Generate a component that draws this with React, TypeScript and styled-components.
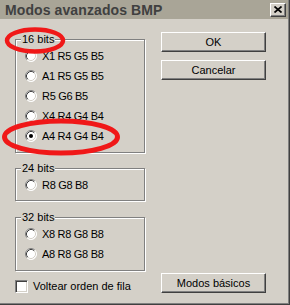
import styled, { createGlobalStyle } from "styled-components"

const GlobalStyle = createGlobalStyle`
    html, body {
        margin: 0;
        padding: 0;
        background: #d4d0c8;
    }
    body {
        font-family: "Liberation Sans", Arial, sans-serif;
        font-size: 11px;
        color: #000;
    }
`

const Window = styled.div`
    position: relative;
    box-sizing: border-box;
    width: 290px;
    height: 305px;
    display: flex;
    flex-direction: column;
    background: #d4d0c8;
    border-right: 1px solid #404040;
    border-bottom: 1px solid #404040;
    padding: 0 1px 1px 0;
    box-shadow: inset -1px -1px 0 #808080;
`

const TitleBar = styled.div`
    display: flex;
    align-items: center;
    justify-content: space-between;
    height: 19px;
    padding: 0 2px 0 5px;
    background: #a9a597;
    color: #404040;
    font-weight: bold;
    font-size: 14px;
    letter-spacing: 0.1px;
`

const CloseButton = styled.div`
    box-sizing: border-box;
    width: 16px;
    height: 14px;
    display: flex;
    align-items: center;
    justify-content: center;
    background: #d4d0c8;
    border-top: 1px solid #fff;
    border-left: 1px solid #fff;
    border-right: 1px solid #404040;
    border-bottom: 1px solid #404040;
    box-shadow: inset -1px -1px 0 #808080;
`

const Body = styled.div`
    flex: 1;
    display: flex;
    gap: 16px;
    padding-left: 15px;
`

const LeftColumn = styled.div`
    display: flex;
    flex-direction: column;
    padding-top: 14px;
`

const Group = styled.fieldset<{ $gap?: number; $bottom?: number }>`
    box-sizing: border-box;
    width: 130px;
    margin: ${p => p.$gap ?? 0}px 0 0 0;
    padding: 0 0 ${p => p.$bottom ?? 6}px 9px;
    border: 1px solid #808080;
    box-shadow: inset 1px 1px 0 #fff, 1px 1px 0 #fff;
    min-inline-size: 0;
`

const Legend = styled.legend`
    margin-left: -4px;
    padding: 0 1px;
    line-height: 13px;
    background: #d4d0c8;
`

const OptionRow = styled.label`
    display: flex;
    align-items: center;
    gap: 5px;
    height: 20px;
    letter-spacing: -0.3px;
`

const CheckRow = styled.label`
    display: flex;
    align-items: center;
    gap: 5px;
    height: 16px;
    margin-top: 7px;
`

const CheckBox = styled.span`
    box-sizing: border-box;
    width: 13px;
    height: 13px;
    background: #fff;
    border-top: 1px solid #808080;
    border-left: 1px solid #808080;
    border-right: 1px solid #fff;
    border-bottom: 1px solid #fff;
    box-shadow: inset 1px 1px 0 #404040, inset -1px -1px 0 #d4d0c8;
`

const RightColumn = styled.div`
    display: flex;
    flex-direction: column;
    gap: 8px;
    padding: 13px 0 10px;
`

const Button = styled.div<{ $push?: boolean }>`
    box-sizing: border-box;
    width: 105px;
    height: 20px;
    display: flex;
    align-items: center;
    justify-content: center;
    margin-top: ${p => (p.$push ? "auto" : "0")};
    background: #d4d0c8;
    border-top: 1px solid #fff;
    border-left: 1px solid #fff;
    border-right: 1px solid #404040;
    border-bottom: 1px solid #404040;
    box-shadow: inset -1px -1px 0 #808080;
`

const Mark = styled.svg<{ $x: number; $y: number }>`
    position: absolute;
    left: ${p => p.$x}px;
    top: ${p => p.$y}px;
    pointer-events: none;
`

function Radio({ checked }: { checked?: boolean }) {
    return (
        <svg width="12" height="12" viewBox="0 0 12 12">
            <circle cx="6" cy="6" r="5.5" fill="#fff" />
            <path d="M2.11 9.89 A5.5 5.5 0 0 1 9.89 2.11" stroke="#808080" fill="none" />
            <path d="M9.89 2.11 A5.5 5.5 0 0 1 2.11 9.89" stroke="#fff" fill="none" />
            <path d="M2.82 9.18 A4.5 4.5 0 0 1 9.18 2.82" stroke="#404040" fill="none" />
            <path d="M9.18 2.82 A4.5 4.5 0 0 1 2.82 9.18" stroke="#d4d0c8" fill="none" />
            {checked && <circle cx="6" cy="6" r="2" fill="#000" />}
        </svg>
    )
}

const Option = ({ label, checked }: { label: string; checked?: boolean }) => (
    <OptionRow>
        <Radio checked={checked} />
        <span>{label}</span>
    </OptionRow>
)

export default function App() {
    return (
        <>
            <GlobalStyle />
            <Window>
                <TitleBar>
                    <span>Modos avanzados BMP</span>
                    <CloseButton>
                        <svg width="8" height="7" viewBox="0 0 8 7">
                            <path d="M0.5 0.5 L7.5 6.5 M7.5 0.5 L0.5 6.5" stroke="#000" strokeWidth="1.7" />
                        </svg>
                    </CloseButton>
                </TitleBar>
                <Body>
                    <LeftColumn>
                        <Group>
                            <Legend>16 bits</Legend>
                            <Option label="X1 R5 G5 B5" />
                            <Option label="A1 R5 G5 B5" />
                            <Option label="R5 G6 B5" />
                            <Option label="X4 R4 G4 B4" />
                            <Option label="A4 R4 G4 B4" checked />
                        </Group>
                        <Group $gap={9} $bottom={5}>
                            <Legend>24 bits</Legend>
                            <Option label="R8 G8 B8" />
                        </Group>
                        <Group $gap={10}>
                            <Legend>32 bits</Legend>
                            <Option label="X8 R8 G8 B8" />
                            <Option label="A8 R8 G8 B8" />
                        </Group>
                        <CheckRow>
                            <CheckBox />
                            <span>Voltear orden de fila</span>
                        </CheckRow>
                    </LeftColumn>
                    <RightColumn>
                        <Button>OK</Button>
                        <Button>Cancelar</Button>
                        <Button $push>Modos básicos</Button>
                    </RightColumn>
                </Body>
                <Mark $x={4} $y={27} width="62" height="27" viewBox="0 0 62 27">
                    <ellipse cx="31" cy="13.5" rx="28" ry="11" fill="none" stroke="#f01818" strokeWidth="4.5" />
                </Mark>
                <Mark $x={1} $y={118} width="120" height="38" viewBox="0 0 120 38">
                    <ellipse cx="60" cy="19" rx="56.5" ry="16" fill="none" stroke="#f01818" strokeWidth="5" />
                </Mark>
            </Window>
        </>
    )
}
